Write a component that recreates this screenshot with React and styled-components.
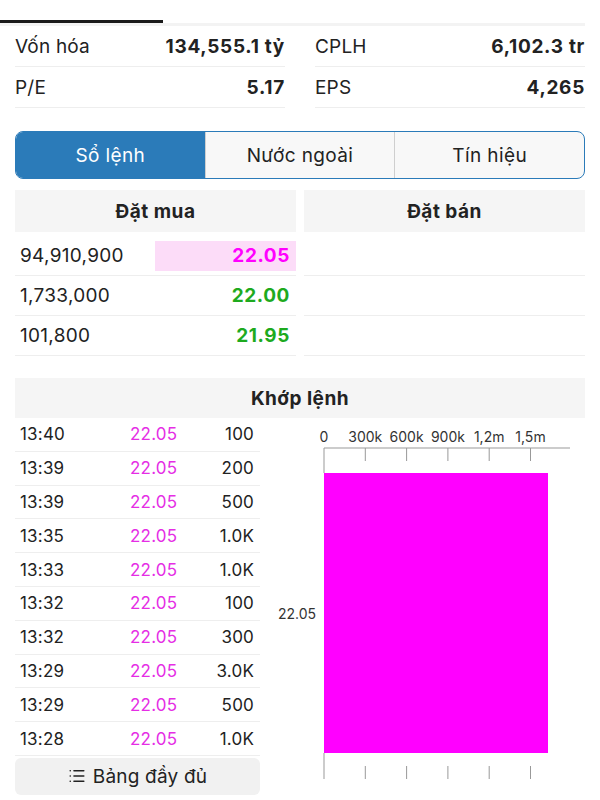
import React from "react";
import styled, { createGlobalStyle } from "styled-components";
import { List } from "lucide-react";

const GlobalStyle = createGlobalStyle`
  body {
    margin: 0;
    background: #fff;
    font-family: Inter, "Liberation Sans", sans-serif;
    color: #222;
  }
`;

const Page = styled.div`
  width: 600px;
  height: 800px;
  overflow: hidden;
`;

const TabStrip = styled.div`
  padding-top: 20px;
`;

const TabIndicator = styled.div`
  width: 163px;
  height: 3px;
  background: #1a1a1a;
`;

const TabShadow = styled.div`
  width: 585px;
  height: 3px;
  background: #f3f3f3;
`;

const Stats = styled.div`
  display: grid;
  grid-template-columns: 1fr 1fr;
  column-gap: 30px;
  padding: 0 15px;
`;

const StatRow = styled.div`
  display: flex;
  justify-content: space-between;
  align-items: center;
  height: 40px;
  border-bottom: 1px solid #eeeeee;
  font-size: 19px;
  letter-spacing: 0.2px;
`;

const StatValue = styled.span`
  font-weight: 700;
  letter-spacing: 0.7px;
`;

const Segmented = styled.div`
  display: flex;
  margin: 23px 15px 11px;
  height: 46px;
  border: 1px solid #2b7bb9;
  border-radius: 8px;
  overflow: hidden;
  background: #f8f8f8;
`;

const Segment = styled.div`
  flex: 1;
  display: flex;
  align-items: center;
  justify-content: center;
  font-size: 19px;
  letter-spacing: 0.4px;
  color: ${(p) => (p.active ? "#fff" : "#222")};
  background: ${(p) => (p.active ? "#2b7bb9" : "transparent")};
  & + & {
    border-left: 1px solid #cfcfcf;
  }
`;

const OrderBook = styled.div`
  display: grid;
  grid-template-columns: 1fr 1fr;
  column-gap: 8px;
  padding: 0 15px;
`;

const SectionHead = styled.div`
  height: ${(p) => p.h || 42}px;
  display: flex;
  align-items: center;
  justify-content: center;
  background: #f5f5f5;
  font-size: 19px;
  letter-spacing: 0.5px;
  font-weight: 700;
`;

const OrderList = styled.div`
  padding-top: 4px;
`;

const OrderRow = styled.div`
  height: 40px;
  display: flex;
  align-items: center;
  justify-content: space-between;
  border-bottom: 1px solid #eeeeee;
  box-sizing: border-box;
  font-size: 19px;
  letter-spacing: 0.3px;
`;

const OrderVol = styled.span`
  padding-left: 5px;
`;

const OrderPrice = styled.span`
  width: 141px;
  height: 30px;
  display: flex;
  align-items: center;
  justify-content: flex-end;
  box-sizing: border-box;
  padding-right: 6px;
  font-weight: 700;
  letter-spacing: 0.6px;
  color: ${(p) => p.color};
  background: ${(p) => (p.hl ? "#fcdcf8" : "transparent")};
`;

const MatchSection = styled.div`
  margin: 22px 15px 0;
`;

const MatchBody = styled.div`
  display: grid;
  grid-template-columns: 245px 1fr;
  column-gap: 10px;
`;

const TradeList = styled.div`
  display: flex;
  flex-direction: column;
`;

const TradeRow = styled.div`
  height: 33.8px;
  display: grid;
  grid-template-columns: 110px 60px 1fr;
  align-items: center;
  padding: 0 6px 0 5px;
  border-bottom: 1px solid #eeeeee;
  box-sizing: border-box;
  font-size: 17px;
  letter-spacing: 0.2px;
  &:last-of-type {
    border-bottom: none;
  }
`;

const TradePrice = styled.span`
  color: #e52ee5;
`;

const TradeVol = styled.span`
  text-align: right;
`;

const FullButton = styled.div`
  margin-top: 2px;
  height: 37px;
  border-radius: 6px;
  background: #f1f1f1;
  display: flex;
  align-items: center;
  justify-content: center;
  gap: 7px;
  font-size: 19px;
  letter-spacing: 0.2px;
  color: #222;
`;

const ChartBox = styled.div`
  height: 377px;
`;

const trades = [
  ["13:40", "100"],
  ["13:39", "200"],
  ["13:39", "500"],
  ["13:35", "1.0K"],
  ["13:33", "1.0K"],
  ["13:32", "100"],
  ["13:32", "300"],
  ["13:29", "3.0K"],
  ["13:29", "500"],
  ["13:28", "1.0K"],
];

const orders = [
  { vol: "94,910,900", price: "22.05", color: "#ff00ff", hl: true },
  { vol: "1,733,000", price: "22.00", color: "#1eaa1e" },
  { vol: "101,800", price: "21.95", color: "#1eaa1e" },
];

const ticks = ["0", "300k", "600k", "900k", "1,2m", "1,5m"];

function VolumeChart() {
  const x0 = 54;
  const step = 41.3;
  return (
    <svg width="315" height="377" viewBox="0 0 315 377">
      <g fontFamily="Inter, 'Liberation Sans', sans-serif" fontSize="14" fill="#333">
        {ticks.map((t, i) => (
          <text key={t} x={x0 + i * step} y="24" textAnchor="middle">
            {t}
          </text>
        ))}
        <text x="46" y="201" textAnchor="end">
          22.05
        </text>
      </g>
      <line x1={x0} y1="30" x2="300" y2="30" stroke="#999" strokeWidth="1" />
      {ticks.map((t, i) => (
        <line
          key={"t" + t}
          x1={x0 + i * step}
          y1="30"
          x2={x0 + i * step}
          y2={i === 0 ? 55 : 43}
          stroke="#999"
          strokeWidth="1"
        />
      ))}
      <rect x={x0} y="55" width="224" height="280" fill="#ff00ff" />
      {ticks.map((t, i) => (
        <line
          key={"b" + t}
          x1={x0 + i * step}
          y1={i === 0 ? 335 : 348}
          x2={x0 + i * step}
          y2="361"
          stroke="#999"
          strokeWidth="1"
        />
      ))}
    </svg>
  );
}

export default function App() {
  return (
    <Page>
      <GlobalStyle />
      <TabStrip>
        <TabIndicator />
        <TabShadow />
      </TabStrip>

      <Stats>
        <div>
          <StatRow>
            <span>Vốn hóa</span>
            <StatValue>134,555.1 tỷ</StatValue>
          </StatRow>
          <StatRow>
            <span>P/E</span>
            <StatValue>5.17</StatValue>
          </StatRow>
        </div>
        <div>
          <StatRow>
            <span>CPLH</span>
            <StatValue>6,102.3 tr</StatValue>
          </StatRow>
          <StatRow>
            <span>EPS</span>
            <StatValue>4,265</StatValue>
          </StatRow>
        </div>
      </Stats>

      <Segmented>
        <Segment active>Sổ lệnh</Segment>
        <Segment>Nước ngoài</Segment>
        <Segment>Tín hiệu</Segment>
      </Segmented>

      <OrderBook>
        <div>
          <SectionHead>Đặt mua</SectionHead>
          <OrderList>
            {orders.map((o) => (
              <OrderRow key={o.vol}>
                <OrderVol>{o.vol}</OrderVol>
                <OrderPrice color={o.color} hl={o.hl}>
                  {o.price}
                </OrderPrice>
              </OrderRow>
            ))}
          </OrderList>
        </div>
        <div>
          <SectionHead>Đặt bán</SectionHead>
          <OrderList>
            <OrderRow />
            <OrderRow />
            <OrderRow />
          </OrderList>
        </div>
      </OrderBook>

      <MatchSection>
        <SectionHead h={40}>Khớp lệnh</SectionHead>
        <MatchBody>
          <TradeList>
            {trades.map(([time, vol], i) => (
              <TradeRow key={i}>
                <span>{time}</span>
                <TradePrice>22.05</TradePrice>
                <TradeVol>{vol}</TradeVol>
              </TradeRow>
            ))}
            <FullButton>
              <List size={18} strokeWidth={2.2} />
              Bảng đầy đủ
            </FullButton>
          </TradeList>
          <ChartBox>
            <VolumeChart />
          </ChartBox>
        </MatchBody>
      </MatchSection>
    </Page>
  );
}
